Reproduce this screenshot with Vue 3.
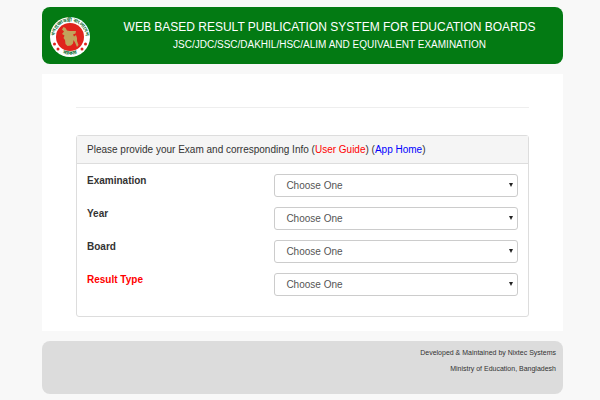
<script setup>
import { reactive } from 'vue'

const fields = reactive([
  { id: 'exam', label: 'Examination', value: '' },
  { id: 'year', label: 'Year', value: '' },
  { id: 'board', label: 'Board', value: '' },
  { id: 'result-type', label: 'Result Type', value: '', required: true },
])
</script>

<template>
  <div class="page">
    <header class="banner">
      <svg class="emblem" viewBox="0 0 80 80" role="img" aria-label="Government seal of Bangladesh">
        <defs>
          <path id="seal-top" d="M11 51 A31 31 0 1 1 69 51" />
          <path id="seal-bottom" d="M18 68 A36 36 0 0 0 62 68" />
        </defs>
        <circle cx="40" cy="40" r="40" fill="#fff" />
        <circle cx="40" cy="40" r="28" fill="#e0231c" />
        <path
          fill="#c2a35c"
          d="M27 20 L31 22 L34 27 L39 28 L52 28 L51 33 L46 35 L48 39 L52 36 L54 42 L54 48 L57 56 L54 60 L50 51 L47 46 L46 53 L42 57 L35 58 L31 54 L30 46 L27 42 L29 37 L24 34 L28 29 L24 25 Z"
        />
        <g fill="#e0231c">
          <circle cx="9" cy="54" r="3" />
          <circle cx="16" cy="64" r="3" />
          <circle cx="64" cy="64" r="3" />
          <circle cx="71" cy="54" r="3" />
        </g>
        <g class="seal-text" fill="#17743a" text-anchor="middle">
          <text><textPath href="#seal-top" startOffset="50%">গণপ্রজাতন্ত্রী বাংলাদেশ</textPath></text>
          <text><textPath href="#seal-bottom" startOffset="50%">সরকার</textPath></text>
        </g>
      </svg>
      <div class="titles">
        <h1>WEB BASED RESULT PUBLICATION SYSTEM FOR EDUCATION BOARDS</h1>
        <p>JSC/JDC/SSC/DAKHIL/HSC/ALIM AND EQUIVALENT EXAMINATION</p>
      </div>
    </header>

    <main class="content">
      <hr />
      <form class="panel" @submit.prevent>
        <div class="panel-heading">
          Please provide your Exam and corresponding Info (<a class="guide" href="#guide">User Guide</a>) (<a class="home" href="#home">App Home</a>)
        </div>
        <div class="panel-body">
          <div v-for="field in fields" :key="field.id" class="row">
            <label :for="field.id" :class="{ required: field.required }">{{ field.label }}</label>
            <div class="control">
              <select :id="field.id" v-model="field.value">
                <option value="">Choose One</option>
              </select>
              <svg class="arrow" viewBox="0 0 4 4" aria-hidden="true"><path d="M0 0H4L2 4Z" /></svg>
            </div>
          </div>
        </div>
      </form>
    </main>

    <footer class="footer">
      <p>Developed &amp; Maintained by Nixtec Systems</p>
      <p>Ministry of Education, Bangladesh</p>
    </footer>
  </div>
</template>

<style>
body {
  background: #f8f8f8;
}
</style>

<style scoped>
.page {
  display: flex;
  flex-direction: column;
  gap: 10px;
  padding: 7px 37px 5px 42px;
  font-family: "Liberation Sans", Arial, sans-serif;
  font-size: 10px;
  color: #333;
}

.page * {
  box-sizing: border-box;
}

.banner {
  display: flex;
  align-items: center;
  padding: 10px 22px 7px 8px;
  border-radius: 8px;
  background: #037a13;
  color: #fff;
}

.emblem {
  flex: none;
  width: 40px;
  height: 40px;
}

.seal-text {
  font-family: "Noto Sans Bengali", "Noto Sans", sans-serif;
  font-size: 10px;
  font-weight: 700;
}

.titles {
  flex: 1;
  padding: 0 0 4px 28px;
  text-align: center;
  white-space: nowrap;
}

.titles h1 {
  margin: 0;
  font-size: 12px;
  font-weight: 400;
  line-height: 20px;
}

.titles p {
  margin: 0;
  line-height: 16px;
}

.content {
  padding: 33px 34px 14px;
  background: #fff;
}

hr {
  margin: 0 0 27px;
  border: 0;
  border-top: 1px solid #eee;
}

.panel {
  border: 1px solid #ddd;
  border-radius: 3px;
}

.panel-heading {
  padding: 0 10px;
  border-bottom: 1px solid #ddd;
  background: #f5f5f5;
  line-height: 27px;
}

.panel-heading a {
  text-decoration: none;
}

.guide {
  color: #f00;
}

.home {
  color: #00f;
}

.panel-body {
  display: flex;
  flex-direction: column;
  gap: 10px;
  padding: 10px 10px 20px;
}

.row {
  display: grid;
  grid-template-columns: 10fr 13fr;
  align-items: start;
}

.row label {
  font-weight: 700;
  line-height: 14px;
}

.row label.required {
  color: #f00;
}

.control {
  position: relative;
}

.control select {
  display: block;
  width: 100%;
  height: 23px;
  padding: 0 11px;
  border: 1px solid #ccc;
  border-radius: 3px;
  appearance: none;
  background: #fff;
  color: #555;
  font: inherit;
}

.arrow {
  position: absolute;
  top: 9px;
  right: 5px;
  width: 4px;
  height: 4px;
  pointer-events: none;
  fill: #222;
}

.footer {
  padding: 4px 7px 17px;
  border-radius: 8px;
  background: #dcdcdc;
  font-size: 7px;
  text-align: right;
}

.footer p {
  margin: 0;
  line-height: 16px;
}
</style>
